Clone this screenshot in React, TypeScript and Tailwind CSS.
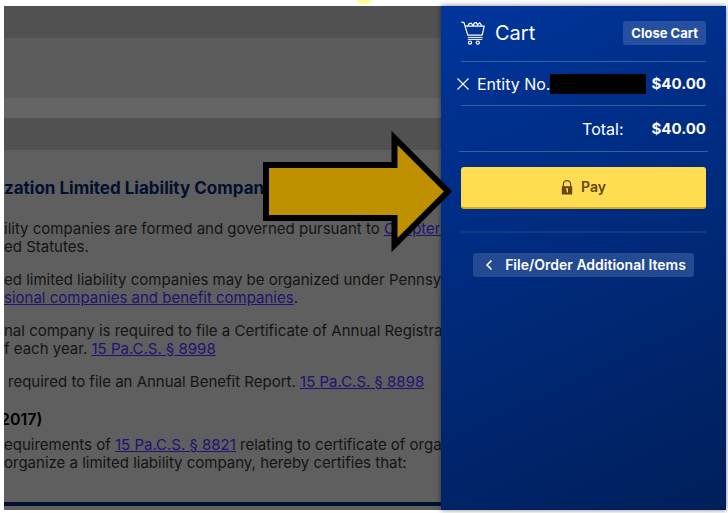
import type { ReactNode } from 'react';
import { ChevronLeft } from 'lucide-react';

function CartIcon() {
  return (
    <svg viewBox="0 0 24 24" className="w-6 h-6 shrink-0" fill="none" stroke="currentColor" strokeWidth="1.2" strokeLinecap="round" strokeLinejoin="round" aria-hidden="true">
      <path d="M0.8 1.2 3 1.6 6.8 14.2H21.2L23.2 5.2H4.4" />
      <path d="M7 4.8 7.8 2.8 10.4 2.2 11.8 4.4M12.6 4.6 13 2 15.6 1.6 16.6 4.4M17 3.4 18.8 1.8 20.6 4.6" />
      <path d="M7.2 16.4H21.2M7.2 18.4H21" strokeWidth="1" />
      <circle cx="9" cy="21.6" r="1.6" />
      <circle cx="16.8" cy="21.6" r="1.6" />
    </svg>
  );
}

function RemoveIcon() {
  return (
    <svg viewBox="0 0 12 12" className="w-3 h-3" fill="none" stroke="currentColor" strokeWidth="1.1" aria-hidden="true">
      <path d="M0.5 0.5 11.5 11.5M11.5 0.5 0.5 11.5" />
    </svg>
  );
}

function LockIcon() {
  return (
    <svg viewBox="0 0 12 15" className="w-3 h-[15px]" aria-hidden="true">
      <path d="M2.4 7V4.2a3.6 3.6 0 0 1 7.2 0V7" fill="none" stroke="currentColor" strokeWidth="1.2" />
      <rect x="0.8" y="6.2" width="10.4" height="8.2" rx="0.6" fill="currentColor" />
      <path d="M4.8 8.2h2.2v4.2H5.6V9.6H4.8z" fill="#ffdc52" />
    </svg>
  );
}

function Arrow() {
  return (
    <svg viewBox="0 0 192 128" className="absolute top-[122px] right-full -mr-3 w-48 h-32 z-10" aria-hidden="true">
      <path d="M5 37H133.5V10L187 63.5 133.5 117V90H5Z" fill="#bf9000" stroke="#000" strokeWidth="6" />
    </svg>
  );
}

function StatuteLink({ children }: { children: ReactNode }) {
  return (
    <a href="#statute" className="text-[#1c1470] underline">
      {children}
    </a>
  );
}

export default function App() {
  return (
    <div className="relative min-h-screen bg-white pt-1.5 pl-1 pr-0.5 pb-[3px] flex overflow-hidden font-['Inter',sans-serif]">
      <div className="absolute left-1/2 -top-2 -ml-2 w-4 h-3 rounded-full bg-[#ffff99]"></div>

      {/* Dimmed page */}
      <main className="flex-1 min-w-0 overflow-hidden whitespace-nowrap bg-[#5f5f5f] text-[#141414] text-[15px] leading-[18px] flex flex-col">
        <div className="h-8 bg-[#515151]"></div>
        <div className="h-[60px] bg-[#5c5c5c]"></div>
        <div className="h-5 bg-[#656565]"></div>
        <div className="h-8 bg-[#515151]"></div>

        <h1 className="mt-7 text-[17px] leading-5 font-bold text-[#02102e]">
          zation Limited Liability Company
        </h1>
        <div className="mt-[22px] space-y-[15px]">
          <p>
            ility companies are formed and governed pursuant to <StatuteLink>Chapter 88</StatuteLink>
            <br />
            ed Statutes.
          </p>
          <p>
            ed limited liability companies may be organized under Pennsylvania
            <br />
            <StatuteLink>sional companies and benefit companies</StatuteLink>.
          </p>
          <p>
            nal company is required to file a Certificate of Annual Registration
            <br />
            f each year. <StatuteLink>15 Pa.C.S. § 8998</StatuteLink>
          </p>
          <p className="pl-1">
            required to file an Annual Benefit Report. <StatuteLink>15 Pa.C.S. § 8898</StatuteLink>
          </p>
        </div>
        <h2 className="-ml-1 mt-[18px] text-base leading-5 font-semibold text-black">2017)</h2>
        <p className="mt-[7px]">
          equirements of <StatuteLink>15 Pa.C.S. § 8821</StatuteLink> relating to certificate of organization
          <br />
          organize a limited liability company, hereby certifies that:
        </p>
        <div className="mt-auto mb-1 h-1 bg-[#020f30]"></div>
      </main>

      {/* Cart drawer */}
      <aside className="relative w-[285px] shrink-0 px-5 pt-[15px] text-white bg-[linear-gradient(155deg,#00359c,#001f5a)] shadow-[0_0_5px_rgba(0,0,0,0.5)]">
        <Arrow />
        <header className="flex items-center justify-between pb-4 border-b border-[#36609f]">
          <h2 className="flex items-center gap-2.5 text-xl leading-6">
            <CartIcon />
            Cart
          </h2>
          <button className="h-6 px-2 rounded-[3px] bg-[#26509f] text-[13px] leading-none font-bold">
            Close Cart
          </button>
        </header>

        <div className="-ml-1 flex items-center h-[43px]">
          <button aria-label="Remove item" className="mr-2">
            <RemoveIcon />
          </button>
          <span className="whitespace-nowrap">Entity No.</span>
          <span className="h-5 flex-1 bg-black"></span>
          <span className="ml-1.5 text-[15px] leading-6 font-bold">$40.00</span>
        </div>

        <div className="flex items-center justify-end gap-7 h-[46px] border-t border-[#36609f]">
          <span>Total:</span>
          <span className="text-[15px] leading-6 font-bold">$40.00</span>
        </div>

        <div className="-mx-0.5 border-t border-[#36609f]"></div>
        <button className="mt-[15px] w-full h-[42px] flex items-center justify-center gap-2 rounded-[3px] border-b-2 border-[#d4ac1c] bg-[#ffdc52] text-[#664600] text-sm font-semibold">
          <LockIcon />
          Pay
        </button>

        <div className="mt-[22px] pt-5 border-t-2 border-[#143a85] flex justify-center">
          <button className="h-6 px-2 flex items-center gap-2 rounded-[3px] bg-[#244b92] text-sm leading-none font-semibold whitespace-nowrap">
            <ChevronLeft className="w-4 h-4" strokeWidth={2.5} />
            File/Order Additional Items
          </button>
        </div>
      </aside>
    </div>
  );
}
